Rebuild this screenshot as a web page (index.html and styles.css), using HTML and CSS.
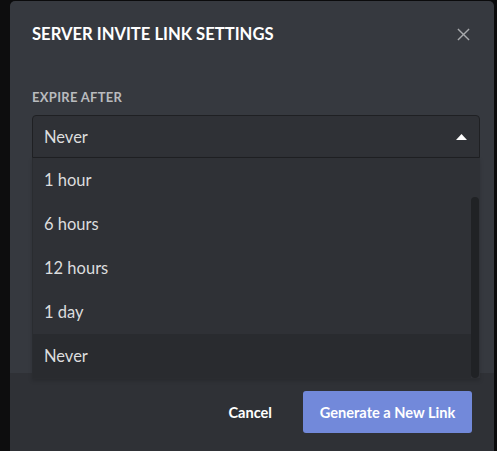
FILE: index.html
```html
<!DOCTYPE html>
<html lang="en">
<head>
    <meta charset="UTF-8">
    <title>Server Invite Link Settings</title>
    <link rel="stylesheet" href="styles.css">
</head>
<body>
    <div class="backdrop">
        <div class="behind"></div>
        <div class="modal">
            <div class="modal-header">
                <h2 class="title">Server Invite Link Settings</h2>
                <button class="close" aria-label="Close">
                    <svg width="13" height="13" viewBox="0 0 14 14">
                        <path d="M1 1L13 13M13 1L1 13" stroke="currentColor" stroke-width="1.5" fill="none"/>
                    </svg>
                </button>
            </div>
            <div class="modal-body">
                <div class="label">Expire After</div>
                <div class="select">
                    <div class="select-value">
                        <span>Never</span>
                        <svg class="caret" width="11" height="6" viewBox="0 0 11 6">
                            <path d="M0 6L5.5 0L11 6Z" fill="currentColor"/>
                        </svg>
                    </div>
                    <div class="options">
                        <div class="option">1 hour</div>
                        <div class="option">6 hours</div>
                        <div class="option">12 hours</div>
                        <div class="option">1 day</div>
                        <div class="option selected">Never</div>
                        <div class="scroll-thumb"></div>
                    </div>
                </div>
            </div>
            <div class="modal-footer">
                <button class="btn-link">Cancel</button>
                <button class="btn-primary">Generate a New Link</button>
            </div>
        </div>
    </div>
</body>
</html>
```

FILE: styles.css
```css
body {
    margin: 0;
    background-color: #0b0b0c;
    font-family: Lato, "Open Sans", sans-serif;
    overflow: hidden;
}
.backdrop {
    display: flex;
    height: 451px;
}
.behind {
    width: 10px;
    flex-shrink: 0;
    background-color: #0d0d0e;
}
.modal {
    width: 484px;
    margin-top: 1px;
    background-color: #36393f;
    border-radius: 5px 5px 0 0;
    display: flex;
    flex-direction: column;
}
.modal-header {
    display: flex;
    align-items: center;
    justify-content: space-between;
    padding: 22px 24px 0 22px;
}
.title {
    margin: 0;
    color: #ffffff;
    font-size: 16.6px;
    font-weight: 700;
    text-transform: uppercase;
    line-height: 22px;
}
.close {
    background: none;
    border: none;
    padding: 0;
    color: #a7a9ac;
    display: flex;
}
.modal-body {
    padding: 0 14px 0 22px;
    position: relative;
    z-index: 1;
}
.label {
    margin-top: 44px;
    color: #b9bbbe;
    font-size: 13px;
    font-weight: 700;
    letter-spacing: 0.3px;
    text-transform: uppercase;
    line-height: 16px;
}
.select {
    margin-top: 10px;
    margin-bottom: -6px;
    color: #dcddde;
    font-size: 16.5px;
}
.select-value {
    height: 41px;
    display: flex;
    align-items: center;
    justify-content: space-between;
    padding: 0 12px 0 11px;
    background-color: #2f3136;
    border: 1px solid #1f2023;
    border-radius: 4px 4px 0 0;
}
.caret {
    color: #ffffff;
}
.options {
    position: relative;
    background-color: #2f3136;
    border: 1px solid #2a2c30;
    border-top: none;
    border-right: none;
    padding-right: 9px;
    box-shadow: 0 2px 4px rgba(0, 0, 0, 0.15);
}
/* scrollbar thumb drawn over the list */
.scroll-thumb {
    position: absolute;
    right: 1px;
    top: 39px;
    bottom: 0;
    width: 8px;
    background-color: #202225;
    border-radius: 4px;
}
.option {
    height: 44px;
    display: flex;
    align-items: center;
    padding-left: 11px;
}
.option.selected {
    background-color: #292b2f;
}
.modal-footer {
    flex: 1;
    display: flex;
    justify-content: flex-end;
    align-items: flex-start;
    gap: 31px;
    background-color: #2f3136;
    padding: 18px 22px 0 0;
}
.btn-link {
    background: none;
    border: none;
    color: #ffffff;
    font-family: inherit;
    font-size: 14.6px;
    font-weight: 700;
    padding: 0;
    height: 42px;
}
.btn-primary {
    width: 169px;
    height: 42px;
    background-color: #7289da;
    border: none;
    border-radius: 3px;
    color: #ffffff;
    font-family: inherit;
    font-size: 14.6px;
    font-weight: 700;
}
```
